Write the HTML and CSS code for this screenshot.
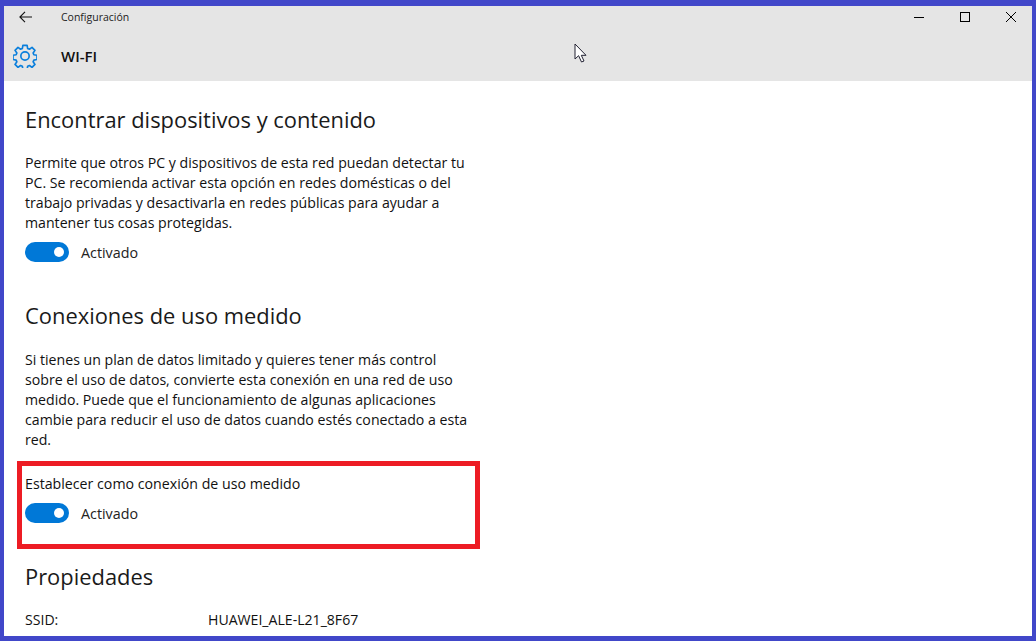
FILE: index.html
```html
<!DOCTYPE html>
<html lang="es">
<head>
<meta charset="utf-8">
<title>Configuración</title>
<link rel="stylesheet" href="styles.css">
</head>
<body>
<div class="frame">
  <header class="header">
    <div class="titlebar">
      <svg class="back" width="14" height="12" viewBox="0 0 14 12"><path d="M6 .8.9 6l5.100 5.200M.9 6h12.100" fill="none" stroke="#111" stroke-width="1.100"/></svg>
      <span class="app-title">Configuración</span>
      <div class="controls">
        <svg width="12" height="12" viewBox="0 0 12 12"><path d="M1 6.500h10" stroke="#000" stroke-width="1"/></svg>
        <svg width="12" height="12" viewBox="0 0 12 12"><rect x="1.500" y="1.500" width="9" height="9" fill="none" stroke="#000"/></svg>
        <svg width="12" height="12" viewBox="0 0 12 12"><path d="M1 1l10 10M11 1 1 11" stroke="#000" stroke-width="1"/></svg>
      </div>
    </div>
    <div class="pagebar">
      <svg class="gear" width="24" height="24" viewBox="0 0 26 26"><g fill="none" stroke="#0a7fdc" stroke-width="1.800" stroke-linejoin="round"><path d="M10.700 1.500h4.600l.6 3.400 1.900.8 2.800-2 3.200 3.200-2 2.800.8 1.900 3.400.6v4.600l-3.400.6-.8 1.900 2 2.800-3.200 3.200-2.800-2-1.900.8-.6 3.400h-4.600l-.6-3.400-1.900-.8-2.800 2-3.200-3.200 2-2.800-.8-1.900-3.400-.6v-4.600l3.400-.6.8-1.900-2-2.800 3.200-3.200 2.800 2 1.900-.8z"/><circle cx="13" cy="13" r="4.500"/></g></svg>
      <h1 class="page-title">WI-FI</h1>
      <svg class="cursor" width="14" height="22" viewBox="0 0 14 22"><path d="M1 1v15l3.600-3.300L7.500 19l2.500-1-2.700-5.700H12z" fill="#fff" stroke="#223" stroke-width="1"/></svg>
    </div>
  </header>
  <main class="content">
    <section class="section first">
      <h2 class="heading">Encontrar dispositivos y contenido</h2>
      <p class="text">Permite que otros PC y dispositivos de esta red puedan detectar tu<br>PC. Se recomienda activar esta opción en redes domésticas o del<br>trabajo privadas y desactivarla en redes públicas para ayudar a<br>mantener tus cosas protegidas.</p>
      <div class="toggle-row"><span class="toggle"><span class="knob"></span></span><span class="state">Activado</span></div>
    </section>
    <section class="section second">
      <h2 class="heading">Conexiones de uso medido</h2>
      <p class="text">Si tienes un plan de datos limitado y quieres tener más control<br>sobre el uso de datos, convierte esta conexión en una red de uso<br>medido. Puede que el funcionamiento de algunas aplicaciones<br>cambie para reducir el uso de datos cuando estés conectado a esta<br>red.</p>
    </section>
    <section class="highlight">
      <div class="label">Establecer como conexión de uso medido</div>
      <div class="toggle-row"><span class="toggle"><span class="knob"></span></span><span class="state">Activado</span></div>
    </section>
    <section class="section third">
      <h2 class="heading">Propiedades</h2>
      <dl class="props"><dt>SSID:</dt><dd>HUAWEI_ALE-L21_8F67</dd></dl>
    </section>
  </main>
</div>
</body>
</html>
```
FILE: styles.css
```css
* { box-sizing: border-box; }
html, body { margin: 0; height: 100%; overflow: hidden; background: #fff; }
body { font-family: "Open Sans", "Noto Sans", sans-serif; color: #111; }
.frame {
  width: 1036px; height: 641px; display: flex; flex-direction: column;
  border-style: solid; border-color: #4147c9; border-width: 6px 4px 5px;
  overflow: hidden; position: relative;
}
.frame::before, .frame::after { content: ""; position: absolute; left: -4px; right: -4px; height: 1px; background: #8f9aa3; }
.frame::before { top: -6px; }
.frame::after { bottom: -5px; background: #b5b5b5; }
.header { background: #e5e5e5; height: 75px; flex: none; }
.titlebar { height: 21px; display: flex; align-items: center; padding-left: 15px; }
.back { flex: none; }
.app-title { font-size: 10.500px; margin-left: 28px; color: #222; }
.controls { margin-left: auto; display: flex; gap: 34px; padding-right: 15px; }
.pagebar { height: 54px; display: flex; align-items: center; padding: 4px 0 0 9px; position: relative; }
.gear { flex: none; }
.page-title { margin: 0 0 0 24px; font-size: 15px; font-weight: 600; color: #111; }
.cursor { position: absolute; left: 570px; top: 16px; }
.content { padding-left: 21px; flex: 1; min-height: 0; }
.section { width: 460px; }
.first { padding-top: 23px; }
.second { padding-top: 38px; }
.third { padding-top: 12px; }
.heading { margin: 0; font-size: 21.900px; font-weight: 400; line-height: 32px; color: #1a1a1a; }
.text { margin: 17px 0 0; font-size: 14.150px; line-height: 20px; white-space: nowrap; color: #111; }
.second .text { margin-top: 18px; }
.toggle-row { display: flex; align-items: center; height: 20px; margin-top: 9px; }
.toggle { width: 44px; height: 20px; border-radius: 10px; background: #0078d7; position: relative; flex: none; }
.knob { position: absolute; right: 5px; top: 5px; width: 10px; height: 10px; border-radius: 50%; background: #fff; }
.state { margin-left: 12px; font-size: 14.300px; color: #222; }
.highlight {
  margin: 11px 0 0 -8px; width: 463px; height: 88px; padding: 8px 0 0 3px;
  border: 5px solid #ed1c24;
}
.label { font-size: 14.200px; line-height: 20px; color: #111; }
.highlight .toggle-row { margin-top: 9px; }
.props { margin: 17px 0 0; display: flex; font-size: 14.100px; line-height: 20px; }
.props dt { width: 183px; }
.props dd { margin: 0; }
```
